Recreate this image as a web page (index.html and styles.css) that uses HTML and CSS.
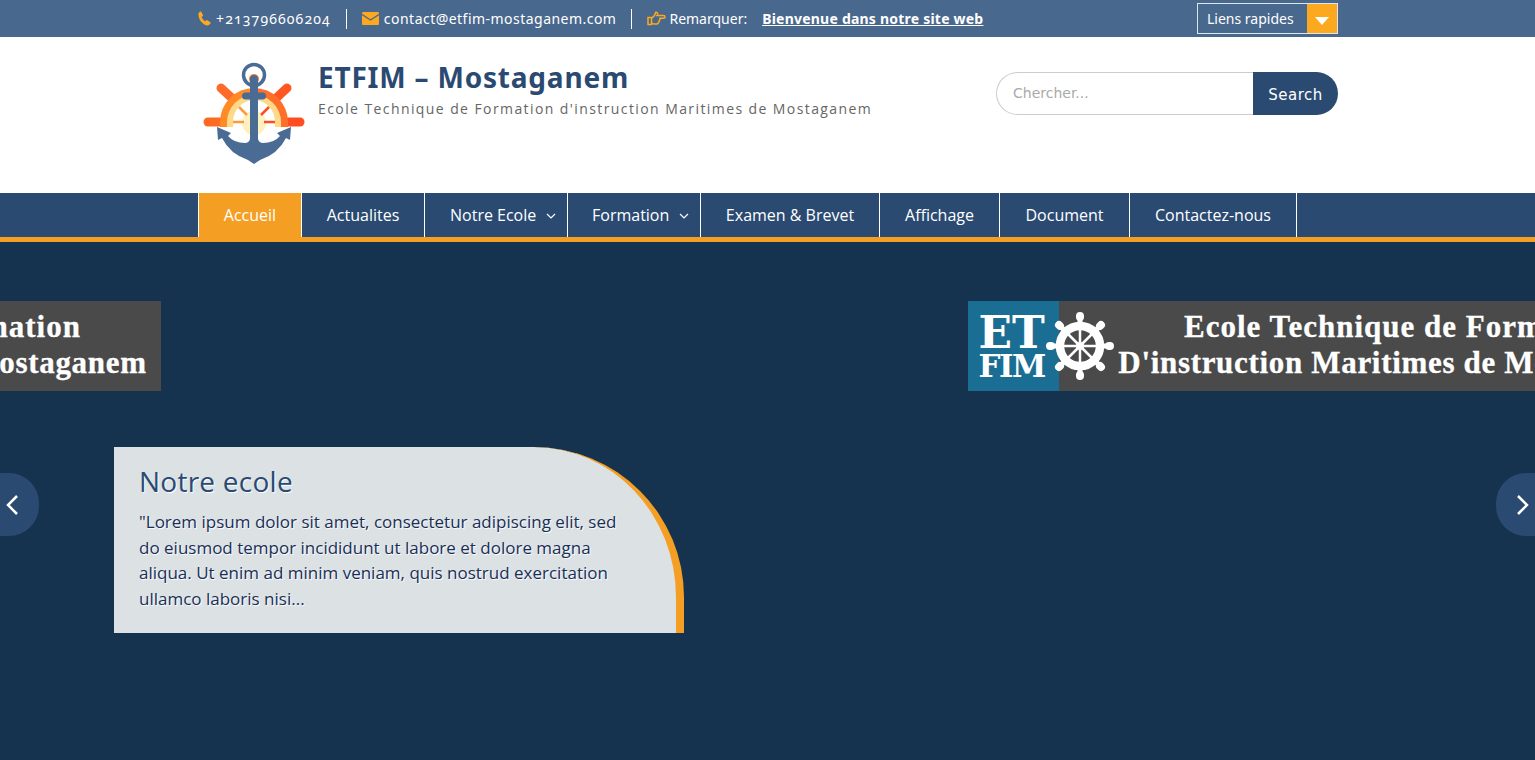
FILE: index.html
```html
<!DOCTYPE html>
<html lang="fr">
<head>
  <meta charset="UTF-8" />
  <title>ETFIM - Mostaganem</title>
  <meta name="viewport" content="width=device-width, initial-scale=1.0"/>
  <link rel="stylesheet" href="styles.css">
</head>
<body>

  <div class="topbar">
    <div class="container topbar-row">
      <div class="top-item">
        <svg class="top-icon" width="13" height="15" viewBox="0 0 13 15"><path d="M3 .6 5 3.900c.2.400.1.800-.2 1.100L3.600 6.100c.5 1.500 1.900 3.300 3.500 4.200L8.300 9.300c.3-.3.700-.3 1-.1l3.100 2c.4.300.4.700.2 1.100-.7 1.200-1.800 2.200-3.100 2.200C5.400 14.500.4 8.400.4 3.700.4 2.300 1.200 1.200 2.100.6c.3-.2.700-.2.900 0z"/></svg>
        <span class="top-phone">+213796606204</span>
      </div>
      <div class="top-item">
        <svg class="top-icon" width="17" height="13" viewBox="0 0 17 13"><path d="M1.300 0h14.400c.7 0 1.300.6 1.300 1.300v.5L8.500 7.300 0 1.800v-.5C0 .6.600 0 1.300 0z"/><path d="M0 3.300 8.500 8.800 17 3.300v8.400c0 .7-.6 1.300-1.300 1.300H1.300C.6 13 0 12.400 0 11.700z"/></svg>
        <span class="top-mail">contact@etfim-mostaganem.com</span>
      </div>
      <div class="top-item top-item-last">
        <svg class="top-icon-line" width="19" height="15" viewBox="0 0 19 15"><path d="M1 6.500h3.500v7H1zM4.500 7.500 7.500 4.500 8.800 1.200c1.500 0 2.200 1 1.700 2.300l-.5 1h6.500c1 0 1.500.7 1.500 1.400s-.6 1.400-1.500 1.400h-3.500c.2 1-.1 1.700-.7 2.200.2 1-.2 1.700-.9 2 0 1-.7 1.500-1.700 1.500H7c-1 0-1.700-.5-2.500-1"/></svg>
        <span class="remark-label">Remarquer:</span>
        <a class="remark-link" href="#">Bienvenue dans notre site web</a>
      </div>
      <div class="quick-links">
        <span class="quick-label">Liens rapides</span>
        <span class="quick-arrow"></span>
      </div>
    </div>
  </div>

  <header class="site-header">
    <div class="container header-row">
      <svg class="logo" width="103" height="103" viewBox="5 7 103 103">
        <g fill="none" stroke-width="9" stroke-linecap="round">
          <path d="M23 33 38 47" stroke="#ff6a2a"/>
          <path d="M89 33 74 47" stroke="#ff5722"/>
          <path d="M10 67H26" stroke="#ff6a22"/>
          <path d="M102 67H86" stroke="#ff4d1f"/>
        </g>
        <path d="M22 72V67a34 34 0 0 1 34-34V72z" fill="#ff8a26"/>
        <path d="M90 72V67a34 34 0 0 0-34-34V72z" fill="#ff6f2a"/>
        <path d="M29 72V67a27 27 0 0 1 54 0V72z" fill="#ffd98a"/>
        <path d="M35 72V67a21 22 0 0 1 42 0V72z" fill="#fff"/>
        <circle cx="56" cy="68" r="12" fill="#fff0c0"/>
        <g fill="none" stroke-width="2.500">
          <path d="M41 52 49 60M35 67H46" stroke="#ff9a3a"/>
          <path d="M71 52 63 60M66 67H77" stroke="#ff4d1f"/>
        </g>
        <circle cx="56" cy="20" r="10.500" fill="none" stroke="#4a6b94" stroke-width="3.500"/>
        <circle cx="56" cy="24" r="5" fill="#ff7a2a"/>
        <path d="M52 24a4 4 0 0 1 8 0V92H52z" fill="#4a6b94"/>
        <path d="M47.500 41H64.500" stroke="#4a6b94" stroke-width="7" stroke-linecap="round"/>
        <path d="M19 72 33 78 30 81Q36 88 47 88 51 88 52 84H60Q61 88 65 88 76 88 82 81L79 78 93 72 92 85 88 83Q80 99 62 105L56 109 50 105Q32 99 24 83L20 85z" fill="#4a6b94"/>
      </svg>
      <div class="brand">
        <h1 class="brand-name">ETFIM – Mostaganem</h1>
        <p class="brand-tag">Ecole Technique de Formation d'instruction Maritimes de Mostaganem</p>
      </div>
      <form class="search">
        <input class="search-input" type="text" placeholder="Chercher...">
        <button class="search-btn" type="button">Search</button>
      </form>
    </div>
  </header>

  <nav class="main-nav">
    <ul class="container nav-list">
      <li class="nav-item nav-active"><a href="#">Accueil</a></li>
      <li class="nav-item"><a href="#">Actualites</a></li>
      <li class="nav-item nav-sub"><a href="#">Notre Ecole</a><svg class="caret" width="10" height="6" viewBox="0 0 10 6"><path d="M1 1 5 5 9 1"/></svg></li>
      <li class="nav-item nav-sub nav-sub-b"><a href="#">Formation</a><svg class="caret" width="10" height="6" viewBox="0 0 10 6"><path d="M1 1 5 5 9 1"/></svg></li>
      <li class="nav-item"><a href="#">Examen &amp; Brevet</a></li>
      <li class="nav-item"><a href="#">Affichage</a></li>
      <li class="nav-item"><a href="#">Document</a></li>
      <li class="nav-item"><a href="#">Contactez-nous</a></li>
    </ul>
  </nav>

  <section class="slider">
    <div class="slide-track">
      <div class="slide">
        <div class="banner">
          <div class="banner-side">
            <span class="banner-et">ET</span>
            <span class="banner-fim">FIM</span>
          </div>
          <div class="banner-text">Ecole Technique de Formation<br><span class="banner-line2">D'instruction Maritimes de Mostaganem</span></div>
        </div>
      </div>
      <div class="slide">
        <div class="banner">
          <div class="banner-side">
            <span class="banner-et">ET</span>
            <span class="banner-fim">FIM</span>
          </div>
          <svg class="banner-wheel" width="70" height="70" viewBox="0 0 70 70">
            <g stroke="#fff" stroke-linecap="round" fill="none">
              <path stroke-width="5" d="M35 7V16M35 54V63M7 35H16M54 35H63M15 15 21 21M49 49 55 55M55 15 49 21M15 55 21 49"/>
              <path stroke-width="8" d="M35 5V6M35 64V65M5 35H6M64 35H65M14 14 15 15M55 55 56 56M56 14 55 15M14 56 15 55"/>
              <circle cx="35" cy="35" r="20" stroke-width="8.500"/>
              <path stroke-width="2.500" d="M35 15V55M15 35H55M21 21 49 49M49 21 21 49"/>
            </g>
            <circle cx="35" cy="35" r="4" fill="#fff"/>
          </svg>
          <div class="banner-text">Ecole Technique de Formation<br><span class="banner-line2">D'instruction Maritimes de Mostaganem</span></div>
        </div>
      </div>
    </div>

    <div class="caption">
      <h2 class="caption-title">Notre ecole</h2>
      <p class="caption-text">"Lorem ipsum dolor sit amet, consectetur adipiscing elit, sed do eiusmod tempor incididunt ut labore et dolore magna aliqua. Ut enim ad minim veniam, quis nostrud exercitation ullamco laboris nisi...</p>
    </div>

    <a class="slide-arrow arrow-prev" href="#"><svg width="14" height="22" viewBox="0 0 14 22"><path d="M12 2 3 11 12 20"/></svg></a>
    <a class="slide-arrow arrow-next" href="#"><svg width="14" height="22" viewBox="0 0 14 22"><path d="M2 2 11 11 2 20"/></svg></a>
  </section>

</body>
</html>
```

FILE: styles.css
```css
* {
  box-sizing: border-box;
}
body {
  margin: 0;
  height: 760px;
  overflow: hidden;
  font-family: "Open Sans", sans-serif;
  background: #15324e;
  display: flex;
  flex-direction: column;
}
a {
  color: inherit;
  text-decoration: none;
}
.container {
  width: 1140px;
  margin-left: 198px;
}

/* top bar */
.topbar {
  height: 37px;
  background: #49688e;
  color: #fff;
  font-family: "Noto Sans", sans-serif;
  font-size: 14px;
}
.topbar-row {
  height: 37px;
  display: flex;
  align-items: center;
}
.top-item {
  display: flex;
  align-items: center;
  gap: 5px;
  height: 20px;
  padding-right: 15px;
  margin-right: 15px;
  border-right: 1px solid #fff;
}
.top-item-last {
  gap: 3px;
  border-right: none;
  margin-right: 0;
  padding-right: 0;
}
.top-phone {
  letter-spacing: 1.150px;
  font-variant-numeric: oldstyle-nums;
}
.top-mail {
  letter-spacing: .47px;
}
.top-icon {
  fill: #fca91f;
}
.top-icon-line {
  fill: none;
  stroke: #fca91f;
  stroke-width: 1.500;
}
.remark-label {
  margin-right: 12px;
}
.remark-link {
  font-weight: 700;
  letter-spacing: .22px;
  text-decoration: underline;
}
.quick-links {
  margin-left: auto;
  width: 141px;
  height: 31px;
  border: 1px solid #dfe5ec;
  display: flex;
  align-items: center;
  justify-content: space-between;
}
.quick-label {
  padding-left: 9px;
}
.quick-arrow {
  width: 30px;
  height: 29px;
  background: #fca91f;
  position: relative;
}
.quick-arrow::after {
  content: "";
  position: absolute;
  left: 8px;
  top: 13px;
  border-left: 7.500px solid transparent;
  border-right: 7.500px solid transparent;
  border-top: 8px solid #fff;
}

/* header */
.site-header {
  height: 156px;
  background: #fff;
}
.header-row {
  display: flex;
  height: 156px;
}
.logo {
  margin: 25px 12px 0 5px;
  flex: none;
}
.brand-name {
  margin: 21px 0 0;
  font-family: "Noto Sans", sans-serif;
  font-size: 28px;
  line-height: 38px;
  font-weight: 700;
  letter-spacing: .8px;
  color: #2a4a72;
}
.brand-tag {
  margin: 3px 0 0;
  font-size: 14px;
  line-height: 20px;
  letter-spacing: 1.410px;
  color: #666;
}
.search {
  margin: 35px 0 0 auto;
  width: 342px;
  height: 43px;
  display: flex;
  font-family: "DejaVu Sans", sans-serif;
}
.search-input {
  flex: 1;
  min-width: 0;
  height: 43px;
  padding: 0 16px 2px;
  border: 1px solid #ccc;
  border-right: none;
  border-radius: 22px 0 0 22px;
  font-family: inherit;
  font-size: 14px;
  outline: none;
}
.search-input::placeholder {
  color: #aaa;
}
.search-btn {
  width: 85px;
  height: 43px;
  padding: 2px 0 0;
  border: none;
  border-radius: 0 22px 22px 0;
  background: #2a4a72;
  color: #fff;
  font-family: inherit;
  font-size: 15px;
  letter-spacing: .5px;
}

/* menu */
.main-nav {
  height: 49px;
  background: #2a4a72;
  border-bottom: 5px solid #f49f23;
}
.nav-list {
  list-style: none;
  padding: 0;
  margin-top: 0;
  margin-bottom: 0;
  height: 44px;
  display: grid;
  grid-template-columns: 103px 123px 143px 133px 179px 120px 130px 167px;
  justify-content: start;
  border-left: 1px solid #fff;
}
.nav-item {
  display: flex;
  align-items: center;
  justify-content: center;
  border-right: 1px solid #fff;
  color: #fff;
  font-size: 16px;
}
.nav-active {
  background: #f49f23;
}
.nav-sub {
  position: relative;
  justify-content: flex-start;
  padding-left: 25px;
}
.nav-sub-b {
  padding-left: 24px;
}
.caret {
  position: absolute;
  right: 11px;
  top: 20px;
  fill: none;
  stroke: #fff;
  stroke-width: 1.200;
}

/* slider */
.slider {
  position: relative;
  flex: 1;
  overflow: hidden;
  background: #15324e;
}
.slide-track {
  display: flex;
  width: 3070px;
  transform: translateX(-971px);
}
.slide {
  width: 1535px;
  height: 518px;
  padding-top: 59px;
  display: flex;
  justify-content: center;
}
.banner {
  position: relative;
  flex: none;
  width: 728px;
  height: 90px;
  display: flex;
  background: #4a4a4a;
  color: #fff;
  font-weight: 700;
}
.banner-side {
  flex: none;
  width: 91px;
  background: #1b6e93;
  display: flex;
  flex-direction: column;
  padding: 15px 0 0 11px;
  font-family: "DejaVu Serif", serif;
}
.banner-et {
  font-size: 44px;
  line-height: 33px;
}
.banner-fim {
  font-size: 31px;
  line-height: 34px;
  letter-spacing: -1.500px;
}
.banner-wheel {
  position: absolute;
  left: 77px;
  top: 10px;
}
.banner-text {
  flex: 1;
  padding: 8px 0 0 46px;
  text-align: center;
  font-family: "Liberation Serif", serif;
  font-size: 31px;
  line-height: 36px;
  letter-spacing: 1px;
  -webkit-text-stroke: .3px #fff;
  white-space: nowrap;
}
.banner-line2 {
  letter-spacing: .68px;
}
.caption {
  position: absolute;
  left: 114px;
  top: 205px;
  width: 570px;
  height: 186px;
  padding: 14px 42px 0 25px;
  background: #dce1e4;
  border-right: 8px solid #f49f23;
  border-top-right-radius: 150px;
}
.caption-title {
  margin: 0;
  font-size: 28px;
  line-height: 40px;
  font-weight: 400;
  letter-spacing: .25px;
  color: #2a4a72;
  text-shadow: 1px 1px 1px #fff;
}
.caption-text {
  margin: 8px 0 0;
  font-size: 17px;
  line-height: 25.500px;
  color: #1a2f55;
  text-shadow: 1px 1px 1px #fff;
}
.slide-arrow {
  position: absolute;
  top: 231px;
  width: 39px;
  height: 63px;
  background: #2a4a72;
  display: flex;
  align-items: center;
}
.slide-arrow svg {
  fill: none;
  stroke: #fff;
  stroke-width: 2.500;
}
.arrow-prev {
  left: 0;
  padding-left: 5px;
  border-radius: 0 30px 30px 0;
}
.arrow-next {
  right: 0;
  padding-left: 20px;
  border-radius: 30px 0 0 30px;
}
```
